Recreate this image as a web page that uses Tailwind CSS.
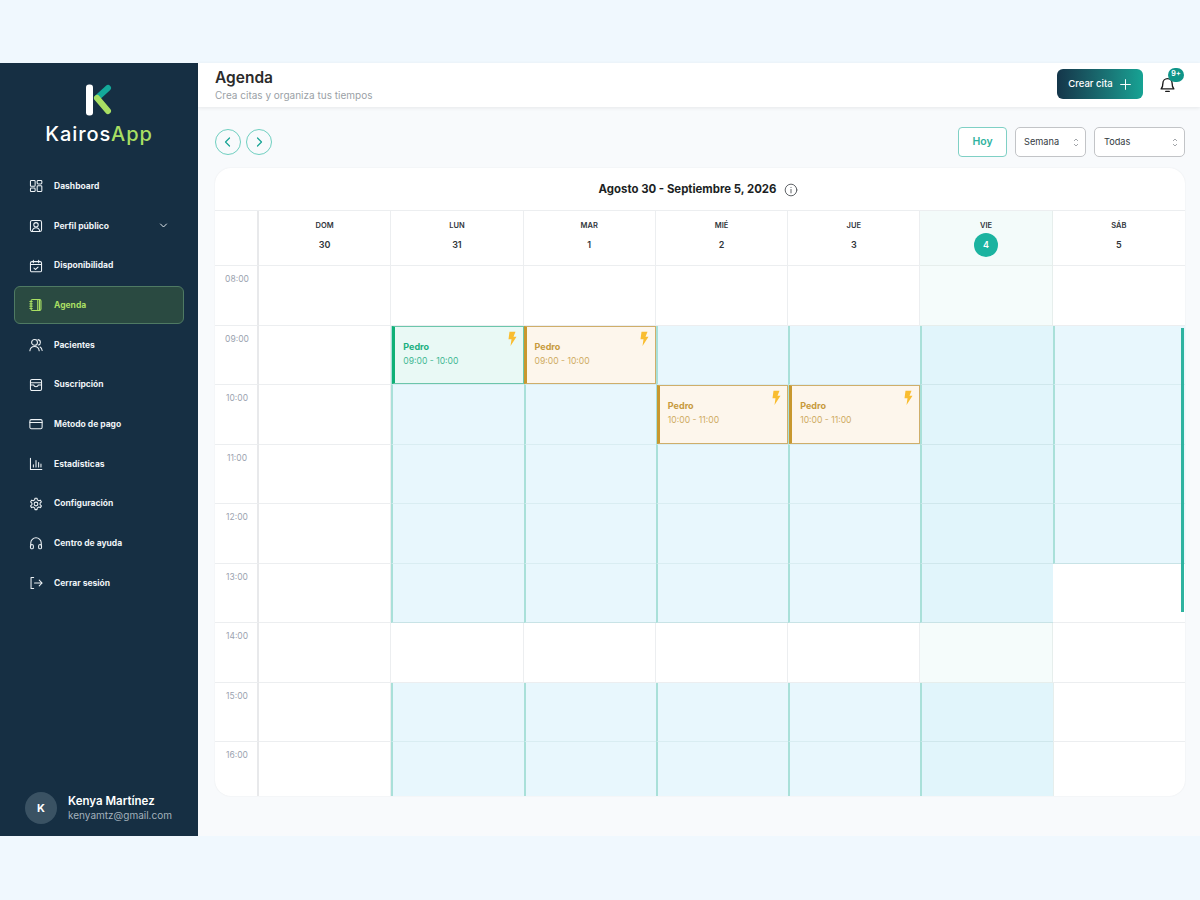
<!doctype html>
<html lang="es">
<head>
<meta charset="utf-8">
<title>Agenda</title>
<script src="https://cdn.jsdelivr.net/npm/@tailwindcss/browser@4"></script>
</head>
<body class="m-0 bg-[#f0f8fe] font-['Inter',sans-serif]">
<div class="h-[900px] w-[1200px] py-[63px] flex flex-col">
<div class="flex h-[773px] w-full">

<!-- Sidebar -->
<aside class="w-[198px] shrink-0 bg-[#162f43] flex flex-col">
  <div class="h-[104.4px] flex flex-col items-center pt-[21px]">
    <svg width="26" height="33" viewBox="0 0 26 33" fill="none">
      <rect x="0" y="0.5" width="7" height="31" rx="3" fill="#ffffff"/>
      <path d="M11 14 L22 4" stroke="#14a99a" stroke-width="6" stroke-linecap="round"/>
      <path d="M11 14 L22 27" stroke="#a9df63" stroke-width="6" stroke-linecap="round"/>
    </svg>
    <div class="mt-[5px] text-[20px] leading-[24px] font-medium tracking-[0.9px] text-white">Kairos<span class="text-[#a9df63]">App</span></div>
  </div>
  <nav class="px-[14px] flex flex-col gap-[2px] text-[8.5px] font-bold text-[#eef3f6]">
    <a class="h-[37.7px] flex items-center gap-[11px] pl-[15px] rounded-md">
      <svg class="w-[14px] h-[14px]" viewBox="0 0 24 24" fill="none" stroke="currentColor" stroke-width="1.8"><rect x="2.5" y="2.5" width="8" height="10" rx="1.5"/><rect x="14" y="2.5" width="8" height="6" rx="1.5"/><rect x="2.5" y="15.5" width="8" height="6" rx="1.5"/><rect x="14" y="11.5" width="8" height="10" rx="1.5"/></svg>
      <span>Dashboard</span>
    </a>
    <a class="h-[37.7px] flex items-center gap-[11px] pl-[15px] pr-[16px] rounded-md">
      <svg class="w-[14px] h-[14px]" viewBox="0 0 24 24" fill="none" stroke="currentColor" stroke-width="1.8"><rect x="2.5" y="2.5" width="19" height="19" rx="3"/><circle cx="12" cy="10" r="3.8"/><path d="M5.5 21c.8-4 3.4-6 6.5-6s5.700 2 6.500 6"/></svg>
      <span>Perfil público</span>
      <svg class="ml-auto w-[9px] h-[9px]" viewBox="0 0 24 24" fill="none" stroke="currentColor" stroke-width="2.500" stroke-linecap="round" stroke-linejoin="round"><path d="M4 8l8 8 8-8"/></svg>
    </a>
    <a class="h-[37.7px] flex items-center gap-[11px] pl-[15px] rounded-md">
      <svg class="w-[14px] h-[14px]" viewBox="0 0 24 24" fill="none" stroke="currentColor" stroke-width="1.8" stroke-linecap="round" stroke-linejoin="round"><rect x="2.500" y="4.500" width="19" height="17.500" rx="2.500"/><path d="M2.500 9.500h19M7.500 2v4.500M16.500 2v4.500M8.500 15.500l2.500 2.500 4.500-4"/></svg>
      <span>Disponibilidad</span>
    </a>
    <a class="h-[37.7px] flex items-center gap-[11px] pl-[14px] rounded-md bg-[#2a4a41] border border-[#4f7a63] text-[#a9df63] box-border">
      <svg class="w-[14px] h-[14px]" viewBox="0 0 24 24" fill="none" stroke="currentColor" stroke-width="1.9" stroke-linecap="round" stroke-linejoin="round"><rect x="3.500" y="2.500" width="17" height="19" rx="2.500"/><path d="M15 2.500v19M18 2.500v19M1.500 6h4M1.500 10h4M1.500 14h4M1.500 18h4"/></svg>
      <span>Agenda</span>
    </a>
    <a class="h-[37.7px] flex items-center gap-[11px] pl-[15px] rounded-md">
      <svg class="w-[14px] h-[14px]" viewBox="0 0 24 24" fill="none" stroke="currentColor" stroke-width="1.8" stroke-linecap="round" stroke-linejoin="round"><circle cx="9.500" cy="7.500" r="5"/><path d="M1.500 22c.5-5 3.500-7.500 8-7.500s7.500 2.500 8 7.500M15.500 2.800c2.400.5 4 2.400 4 4.700s-1.400 4-3.500 4.600M19 15.500c2 1.200 3.200 3.300 3.500 6"/></svg>
      <span>Pacientes</span>
    </a>
    <a class="h-[37.7px] flex items-center gap-[11px] pl-[15px] rounded-md">
      <svg class="w-[14px] h-[14px]" viewBox="0 0 24 24" fill="none" stroke="currentColor" stroke-width="1.8" stroke-linecap="round" stroke-linejoin="round"><rect x="2.500" y="2.500" width="19" height="19" rx="2.500"/><path d="M2.500 8h19M2.500 12h5.500c.5 2 2 3 4 3s3.500-1 4-3h5.500"/></svg>
      <span>Suscripción</span>
    </a>
    <a class="h-[37.7px] flex items-center gap-[11px] pl-[15px] rounded-md">
      <svg class="w-[14px] h-[14px]" viewBox="0 0 24 24" fill="none" stroke="currentColor" stroke-width="1.8" stroke-linecap="round" stroke-linejoin="round"><rect x="1.500" y="4.500" width="21" height="15.500" rx="2.500"/><path d="M1.500 9.500h21"/></svg>
      <span>Método de pago</span>
    </a>
    <a class="h-[37.7px] flex items-center gap-[11px] pl-[15px] rounded-md">
      <svg class="w-[14px] h-[14px]" viewBox="0 0 24 24" fill="none" stroke="currentColor" stroke-width="1.8" stroke-linecap="round" stroke-linejoin="round"><path d="M2.500 2v19.500h19.500M7.500 17v-3.500M12 17V6M16.500 17v-7.500M20.500 17v-5"/></svg>
      <span>Estadísticas</span>
    </a>
    <a class="h-[37.7px] flex items-center gap-[11px] pl-[15px] rounded-md">
      <svg class="w-[14px] h-[14px]" viewBox="0 0 24 24" fill="none" stroke="currentColor" stroke-width="1.8" stroke-linecap="round" stroke-linejoin="round"><circle cx="12" cy="12" r="3.200"/><path d="M10.300 2h3.400l.6 3 2.400 1.400 2.900-1 1.700 3-2.300 2v2.800l2.300 2-1.700 3-2.900-1-2.400 1.400-.6 3h-3.400l-.6-3-2.400-1.400-2.900 1-1.700-3 2.300-2v-2.800l-2.300-2 1.700-3 2.900 1 2.400-1.400z"/></svg>
      <span>Configuración</span>
    </a>
    <a class="h-[37.7px] flex items-center gap-[11px] pl-[15px] rounded-md">
      <svg class="w-[14px] h-[14px]" viewBox="0 0 24 24" fill="none" stroke="currentColor" stroke-width="1.8" stroke-linecap="round" stroke-linejoin="round"><path d="M3 17v-5a9 9 0 0 1 18 0v5"/><rect x="2.500" y="14.500" width="5" height="7.500" rx="2.500"/><rect x="16.500" y="14.500" width="5" height="7.500" rx="2.500"/></svg>
      <span>Centro de ayuda</span>
    </a>
    <a class="h-[37.7px] flex items-center gap-[11px] pl-[15px] rounded-md">
      <svg class="w-[14px] h-[14px]" viewBox="0 0 24 24" fill="none" stroke="currentColor" stroke-width="1.8" stroke-linecap="round" stroke-linejoin="round"><path d="M8 2.500H3.500v19H8M9.500 12h13M17.500 7l5 5-5 5"/></svg>
      <span>Cerrar sesión</span>
    </a>
  </nav>
  <div class="mt-auto h-[44px] mb-[6px] pl-[25px] flex items-center gap-[11px]">
    <div class="w-[32px] h-[32px] rounded-full bg-[#3a5263] flex items-center justify-center text-[11px] font-bold text-white">K</div>
    <div class="flex flex-col">
      <span class="text-[11.5px] leading-[14px] font-semibold text-white">Kenya Martínez</span>
      <span class="text-[10px] leading-[14px] text-[#a3b1bc]">kenyamtz@gmail.com</span>
    </div>
  </div>
</aside>

<!-- Main -->
<main class="flex-1 bg-[#f8fafc] flex flex-col min-w-0">
  <header class="h-[44px] bg-white shadow-[0_1px_4px_rgba(0,0,0,0.08)] flex items-center pl-[17px] pr-[16px] relative">
    <div class="flex flex-col">
      <h1 class="text-[15.5px] leading-[19px] font-semibold text-[#2b2b2b]">Agenda</h1>
      <p class="text-[10px] leading-[13px] mt-[2px] text-[#9a9fa6]">Crea citas y organiza tus tiempos</p>
    </div>
    <button class="ml-auto h-[30px] w-[86px] mt-[-2px] pt-[1px] rounded-md bg-gradient-to-r from-[#14364a] to-[#16a394] text-white text-[9.5px] font-medium flex items-center justify-center gap-[6px]">
      Crear cita
      <svg class="w-[13px] h-[13px]" viewBox="0 0 24 24" fill="none" stroke="currentColor" stroke-width="1.800" stroke-linecap="round"><path d="M12 3v18M3 12h18"/></svg>
    </button>
    <div class="ml-[16px] mr-[8px] relative w-[17px] h-[18px] mt-[-1px]">
      <svg class="w-[17px] h-[18px]" viewBox="0 0 24 24" fill="none" stroke="#1a1a1a" stroke-width="1.900" stroke-linecap="round" stroke-linejoin="round"><path d="M5.500 9.500a6.500 6.500 0 0 1 13 0c0 4.500 1 6.500 2.500 8H3c1.500-1.500 2.500-3.500 2.500-8z"/><path d="M9.500 21h5"/></svg>
      <span class="absolute left-[9px] top-[-8px] w-[16px] h-[14px] rounded-full bg-[#0f9488] text-white text-[7px] font-bold flex items-center justify-center">9+</span>
    </div>
  </header>

  <div class="px-[17px] pr-[15px] pt-[20px] flex-1 min-h-0 flex flex-col">
    <div class="h-[30px] flex items-center">
      <button class="w-[26px] h-[26px] rounded-full border border-[#6fcfc0] flex items-center justify-center text-[#16a394]">
        <svg class="w-[12px] h-[12px]" viewBox="0 0 24 24" fill="none" stroke="currentColor" stroke-width="2.400" stroke-linecap="round" stroke-linejoin="round"><path d="M15 4l-8 8 8 8"/></svg>
      </button>
      <button class="ml-[5px] w-[26px] h-[26px] rounded-full border border-[#6fcfc0] flex items-center justify-center text-[#16a394]">
        <svg class="w-[12px] h-[12px]" viewBox="0 0 24 24" fill="none" stroke="currentColor" stroke-width="2.400" stroke-linecap="round" stroke-linejoin="round"><path d="M9 4l8 8-8 8"/></svg>
      </button>
      <button class="ml-auto w-[49px] h-[30px] rounded-[4px] border border-[#7fd0c5] bg-white text-[10.5px] font-semibold text-[#2fb3a0]">Hoy</button>
      <div class="ml-[8px] w-[71px] h-[30px] rounded-[5px] border border-[#c2c4c7] bg-white flex items-center pl-[8px] pr-[6px] text-[9.2px] text-[#333a42]">
        Semana
        <svg class="ml-auto w-[6px] h-[11px]" viewBox="0 0 6 11" fill="none" stroke="#a3a7ab" stroke-width="1"><path d="M1 4l2-2 2 2M1 7l2 2 2-2"/></svg>
      </div>
      <div class="ml-[8px] w-[91px] h-[30px] rounded-[5px] border border-[#c2c4c7] bg-white flex items-center pl-[9px] pr-[6px] text-[9.2px] text-[#333a42]">
        Todas
        <svg class="ml-auto w-[6px] h-[11px]" viewBox="0 0 6 11" fill="none" stroke="#a3a7ab" stroke-width="1"><path d="M1 4l2-2 2 2M1 7l2 2 2-2"/></svg>
      </div>
    </div>

    <section class="mt-[11px] w-[970px] h-[628px] bg-white rounded-[16px] overflow-hidden shadow-[0_0_2px_rgba(0,0,0,0.07)] relative">
      <div class="h-[43px] flex items-center justify-center gap-[8px] pr-[3px] text-[11.4px] font-bold text-[#1c1f24]">
        <span>Agosto 30 - Septiembre 5, 2026</span>
        <svg class="w-[14px] h-[14px]" viewBox="0 0 24 24" fill="none" stroke="#55595e" stroke-width="1.600" stroke-linecap="round"><circle cx="12" cy="12" r="10"/><path d="M12 11v6M12 7.500v.2"/></svg>
      </div>

      <div class="grid grid-cols-[44px_repeat(7,1fr)] grid-rows-[55px_repeat(8,59.5px)_54.5px] border-t border-[#eceef0] mt-[-1px]">
        <!-- Header -->
        <div class="border-r-2 border-r-[#e8e9eb] border-b border-b-[#eceef0]"></div>
        <div class="border-r border-b border-[#eceef0] flex flex-col items-center pt-[10px] text-[#30353b]"><span class="text-[7.5px] leading-[10px] font-semibold">DOM</span><span class="text-[9px] leading-[24px] mt-[2px] font-semibold">30</span></div>
        <div class="border-r border-b border-[#eceef0] flex flex-col items-center pt-[10px] text-[#30353b]"><span class="text-[7.5px] leading-[10px] font-semibold">LUN</span><span class="text-[9px] leading-[24px] mt-[2px] font-semibold">31</span></div>
        <div class="border-r border-b border-[#eceef0] flex flex-col items-center pt-[10px] text-[#30353b]"><span class="text-[7.5px] leading-[10px] font-semibold">MAR</span><span class="text-[9px] leading-[24px] mt-[2px] font-semibold">1</span></div>
        <div class="border-r border-b border-[#eceef0] flex flex-col items-center pt-[10px] text-[#30353b]"><span class="text-[7.5px] leading-[10px] font-semibold">MIÉ</span><span class="text-[9px] leading-[24px] mt-[2px] font-semibold">2</span></div>
        <div class="border-r border-b border-[#eceef0] flex flex-col items-center pt-[10px] text-[#30353b]"><span class="text-[7.5px] leading-[10px] font-semibold">JUE</span><span class="text-[9px] leading-[24px] mt-[2px] font-semibold">3</span></div>
        <div class="border-r border-b border-[#e6eeec] bg-[#f3fbfa] flex flex-col items-center pt-[10px] text-[#30353b]"><span class="text-[7.5px] leading-[10px] font-semibold">VIE</span><span class="w-[24px] h-[24px] mt-[2px] rounded-full bg-[#1bb3a0] text-white text-[9px] font-semibold flex items-center justify-center">4</span></div>
        <div class="border-b border-[#eceef0] flex flex-col items-center pt-[10px] text-[#30353b]"><span class="text-[7.5px] leading-[10px] font-semibold">SÁB</span><span class="text-[9px] leading-[24px] mt-[2px] font-semibold">5</span></div>

        <!-- 08:00 -->
        <div class="border-r-2 border-r-[#e8e9eb] border-b border-b-[#eceef0] text-center pl-[2px] pt-[7px] text-[8.5px] leading-[12px] text-[#9ca3af]">08:00</div>
        <div class="border-r border-b border-[#eceef0]"></div>
        <div class="border-r border-b border-[#eceef0]"></div>
        <div class="border-r border-b border-[#eceef0]"></div>
        <div class="border-r border-b border-[#eceef0]"></div>
        <div class="border-r border-b border-[#eceef0]"></div>
        <div class="border-r border-b border-[#e6eeec] bg-[#f5fcfb]"></div>
        <div class="border-b border-[#eceef0]"></div>

        <!-- 09:00 -->
        <div class="border-r-2 border-r-[#e8e9eb] border-b border-b-[#eceef0] text-center pl-[2px] pt-[7px] text-[8.5px] leading-[12px] text-[#9ca3af]">09:00</div>
        <div class="border-r border-b border-[#eceef0]"></div>
        <div class="relative border-l-2 border-l-[#a9e0d9] border-b border-b-[#d9edf2] bg-[#e8f7fd]">
          <div class="absolute left-[-1px] top-0 right-0 bottom-0 bg-[#e9f9f5] border border-[#6cc6ab] border-l-[3px] border-l-[#10b077] pl-[8px] pt-[14px]">
            <div class="text-[9px] leading-[12px] font-bold text-[#1bb07f]">Pedro</div>
            <div class="mt-[2px] text-[8.6px] leading-[12px] text-[#3fb893]">09:00 - 10:00</div>
            <svg class="absolute top-[4px] right-[5px] w-[12px] h-[15px]" viewBox="0 0 24 24" preserveAspectRatio="none" fill="#f9bd30"><path d="M7 1h12l-4 8h6L9 24l2-11H5z"/></svg>
          </div>
        </div>
        <div class="relative border-l-2 border-l-[#a9e0d9] border-b border-b-[#d9edf2] bg-[#e8f7fd]">
          <div class="absolute left-[-2px] top-0 right-0 bottom-0 bg-[#fdf6ec] border border-[#cfae6a] border-l-[3px] border-l-[#c8982f] pl-[8px] pt-[14px]">
            <div class="text-[9px] leading-[12px] font-bold text-[#c79a3d]">Pedro</div>
            <div class="mt-[2px] text-[8.6px] leading-[12px] text-[#cfab62]">09:00 - 10:00</div>
            <svg class="absolute top-[4px] right-[5px] w-[12px] h-[15px]" viewBox="0 0 24 24" preserveAspectRatio="none" fill="#f9bd30"><path d="M7 1h12l-4 8h6L9 24l2-11H5z"/></svg>
          </div>
        </div>
        <div class="border-l-2 border-l-[#a9e0d9] border-b border-b-[#d9edf2] bg-[#e8f7fd]"></div>
        <div class="border-l-2 border-l-[#a9e0d9] border-b border-b-[#d9edf2] bg-[#e8f7fd]"></div>
        <div class="border-l-2 border-l-[#a9e0d9] border-b border-b-[#cfe7ec] bg-[#e1f5fb]"></div>
        <div class="border-l-2 border-l-[#a9e0d9] border-b border-b-[#d9edf2] bg-[#e8f7fd]"></div>

        <!-- 10:00 -->
        <div class="border-r-2 border-r-[#e8e9eb] border-b border-b-[#eceef0] text-center pl-[2px] pt-[7px] text-[8.5px] leading-[12px] text-[#9ca3af]">10:00</div>
        <div class="border-r border-b border-[#eceef0]"></div>
        <div class="border-l-2 border-l-[#a9e0d9] border-b border-b-[#d9edf2] bg-[#e8f7fd]"></div>
        <div class="border-l-2 border-l-[#a9e0d9] border-b border-b-[#d9edf2] bg-[#e8f7fd]"></div>
        <div class="relative border-l-2 border-l-[#a9e0d9] border-b border-b-[#d9edf2] bg-[#e8f7fd]">
          <div class="absolute left-[-1px] top-0 right-0 bottom-0 bg-[#fdf6ec] border border-[#cfae6a] border-l-[3px] border-l-[#c8982f] pl-[8px] pt-[14px]">
            <div class="text-[9px] leading-[12px] font-bold text-[#c79a3d]">Pedro</div>
            <div class="mt-[2px] text-[8.6px] leading-[12px] text-[#cfab62]">10:00 - 11:00</div>
            <svg class="absolute top-[4px] right-[5px] w-[12px] h-[15px]" viewBox="0 0 24 24" preserveAspectRatio="none" fill="#f9bd30"><path d="M7 1h12l-4 8h6L9 24l2-11H5z"/></svg>
          </div>
        </div>
        <div class="relative border-l-2 border-l-[#a9e0d9] border-b border-b-[#d9edf2] bg-[#e8f7fd]">
          <div class="absolute left-[-1px] top-0 right-0 bottom-0 bg-[#fdf6ec] border border-[#cfae6a] border-l-[3px] border-l-[#c8982f] pl-[8px] pt-[14px]">
            <div class="text-[9px] leading-[12px] font-bold text-[#c79a3d]">Pedro</div>
            <div class="mt-[2px] text-[8.6px] leading-[12px] text-[#cfab62]">10:00 - 11:00</div>
            <svg class="absolute top-[4px] right-[5px] w-[12px] h-[15px]" viewBox="0 0 24 24" preserveAspectRatio="none" fill="#f9bd30"><path d="M7 1h12l-4 8h6L9 24l2-11H5z"/></svg>
          </div>
        </div>
        <div class="border-l-2 border-l-[#a9e0d9] border-b border-b-[#cfe7ec] bg-[#e1f5fb]"></div>
        <div class="border-l-2 border-l-[#a9e0d9] border-b border-b-[#d9edf2] bg-[#e8f7fd]"></div>

        <!-- 11:00 -->
        <div class="border-r-2 border-r-[#e8e9eb] border-b border-b-[#eceef0] text-center pl-[2px] pt-[7px] text-[8.5px] leading-[12px] text-[#9ca3af]">11:00</div>
        <div class="border-r border-b border-[#eceef0]"></div>
        <div class="border-l-2 border-l-[#a9e0d9] border-b border-b-[#d9edf2] bg-[#e8f7fd]"></div>
        <div class="border-l-2 border-l-[#a9e0d9] border-b border-b-[#d9edf2] bg-[#e8f7fd]"></div>
        <div class="border-l-2 border-l-[#a9e0d9] border-b border-b-[#d9edf2] bg-[#e8f7fd]"></div>
        <div class="border-l-2 border-l-[#a9e0d9] border-b border-b-[#d9edf2] bg-[#e8f7fd]"></div>
        <div class="border-l-2 border-l-[#a9e0d9] border-b border-b-[#cfe7ec] bg-[#e1f5fb]"></div>
        <div class="border-l-2 border-l-[#a9e0d9] border-b border-b-[#d9edf2] bg-[#e8f7fd]"></div>

        <!-- 12:00 -->
        <div class="border-r-2 border-r-[#e8e9eb] border-b border-b-[#eceef0] text-center pl-[2px] pt-[7px] text-[8.5px] leading-[12px] text-[#9ca3af]">12:00</div>
        <div class="border-r border-b border-[#eceef0]"></div>
        <div class="border-l-2 border-l-[#a9e0d9] border-b border-b-[#d9edf2] bg-[#e8f7fd]"></div>
        <div class="border-l-2 border-l-[#a9e0d9] border-b border-b-[#d9edf2] bg-[#e8f7fd]"></div>
        <div class="border-l-2 border-l-[#a9e0d9] border-b border-b-[#d9edf2] bg-[#e8f7fd]"></div>
        <div class="border-l-2 border-l-[#a9e0d9] border-b border-b-[#d9edf2] bg-[#e8f7fd]"></div>
        <div class="border-l-2 border-l-[#a9e0d9] border-b border-b-[#cfe7ec] bg-[#e1f5fb]"></div>
        <div class="border-l-2 border-l-[#a9e0d9] border-b border-b-[#c8e3e6] bg-[#e8f7fd]"></div>

        <!-- 13:00 -->
        <div class="border-r-2 border-r-[#e8e9eb] border-b border-b-[#eceef0] text-center pl-[2px] pt-[7px] text-[8.5px] leading-[12px] text-[#9ca3af]">13:00</div>
        <div class="border-r border-b border-[#eceef0]"></div>
        <div class="border-l-2 border-l-[#a9e0d9] border-b border-b-[#c8e3e6] bg-[#e8f7fd]"></div>
        <div class="border-l-2 border-l-[#a9e0d9] border-b border-b-[#c8e3e6] bg-[#e8f7fd]"></div>
        <div class="border-l-2 border-l-[#a9e0d9] border-b border-b-[#c8e3e6] bg-[#e8f7fd]"></div>
        <div class="border-l-2 border-l-[#a9e0d9] border-b border-b-[#c8e3e6] bg-[#e8f7fd]"></div>
        <div class="border-l-2 border-l-[#a9e0d9] border-b border-b-[#c8e3e6] bg-[#e1f5fb]"></div>
        <div class="border-b border-[#eceef0]"></div>

        <!-- 14:00 -->
        <div class="border-r-2 border-r-[#e8e9eb] border-b border-b-[#eceef0] text-center pl-[2px] pt-[7px] text-[8.5px] leading-[12px] text-[#9ca3af]">14:00</div>
        <div class="border-r border-b border-[#eceef0]"></div>
        <div class="border-r border-b border-[#eceef0]"></div>
        <div class="border-r border-b border-[#eceef0]"></div>
        <div class="border-r border-b border-[#eceef0]"></div>
        <div class="border-r border-b border-[#eceef0]"></div>
        <div class="border-r border-b border-[#e6eeec] bg-[#f5fcfb]"></div>
        <div class="border-b border-[#eceef0]"></div>

        <!-- 15:00 -->
        <div class="border-r-2 border-r-[#e8e9eb] border-b border-b-[#eceef0] text-center pl-[2px] pt-[7px] text-[8.5px] leading-[12px] text-[#9ca3af]">15:00</div>
        <div class="border-r border-b border-[#eceef0]"></div>
        <div class="border-l-2 border-l-[#a9e0d9] border-b border-b-[#d9edf2] bg-[#e8f7fd]"></div>
        <div class="border-l-2 border-l-[#a9e0d9] border-b border-b-[#d9edf2] bg-[#e8f7fd]"></div>
        <div class="border-l-2 border-l-[#a9e0d9] border-b border-b-[#d9edf2] bg-[#e8f7fd]"></div>
        <div class="border-l-2 border-l-[#a9e0d9] border-b border-b-[#d9edf2] bg-[#e8f7fd]"></div>
        <div class="border-l-2 border-l-[#a9e0d9] border-b border-b-[#cfe7ec] bg-[#e1f5fb]"></div>
        <div class="border-l border-l-[#e6eeec] border-b border-b-[#eceef0]"></div>

        <!-- 16:00 -->
        <div class="border-r-2 border-r-[#e8e9eb] text-center pl-[2px] pt-[7px] text-[8.5px] leading-[12px] text-[#9ca3af]">16:00</div>
        <div class="border-r border-[#eceef0]"></div>
        <div class="border-l-2 border-l-[#a9e0d9] bg-[#e8f7fd]"></div>
        <div class="border-l-2 border-l-[#a9e0d9] bg-[#e8f7fd]"></div>
        <div class="border-l-2 border-l-[#a9e0d9] bg-[#e8f7fd]"></div>
        <div class="border-l-2 border-l-[#a9e0d9] bg-[#e8f7fd]"></div>
        <div class="border-l-2 border-l-[#a9e0d9] bg-[#e1f5fb]"></div>
        <div class="border-l border-l-[#e6eeec]"></div>
      </div>
      <div class="absolute right-[1px] top-[160px] w-[3px] h-[284px] bg-[#2fb3a0]"></div>
    </section>
  </div>
</main>
</div>
</div>
</body>
</html>
